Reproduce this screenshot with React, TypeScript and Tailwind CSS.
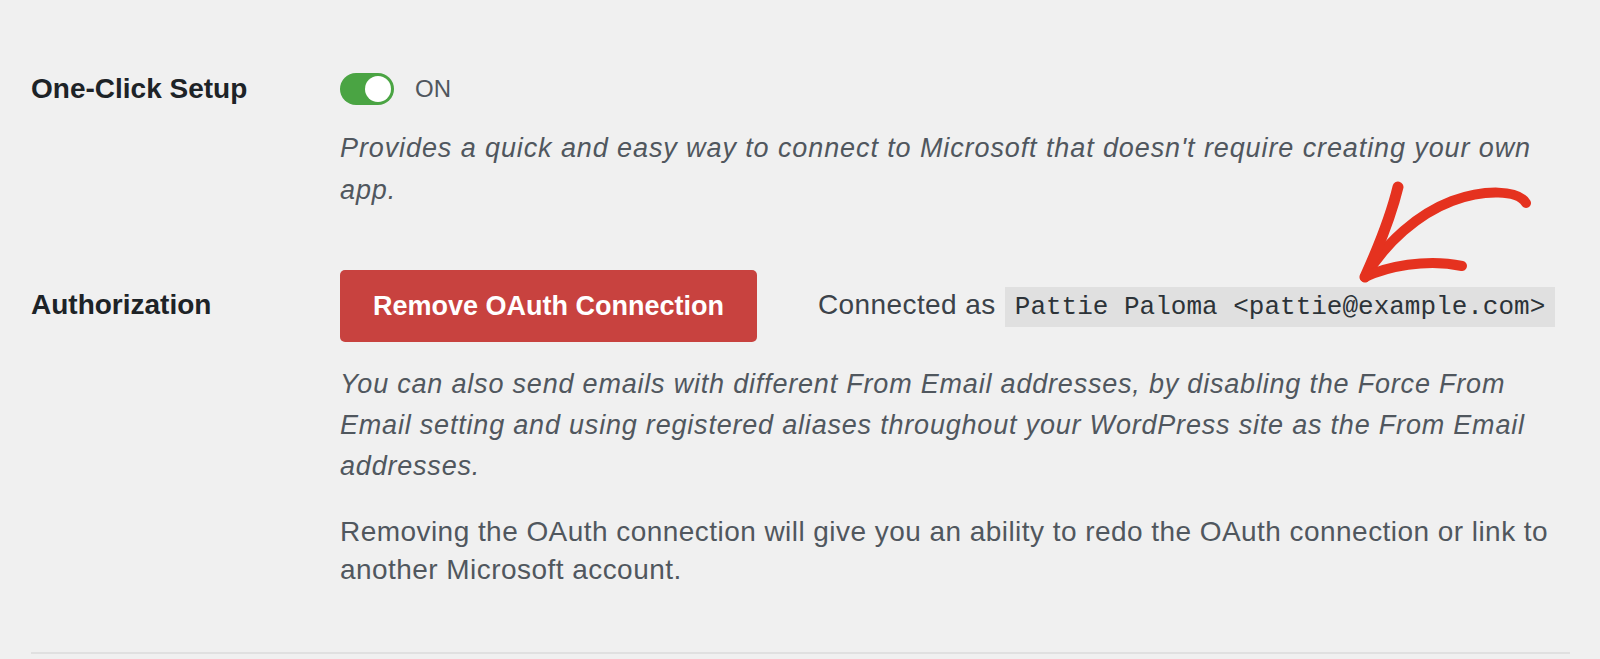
import { useState } from 'react';

const sans = { fontFamily: '"Liberation Sans", Arial, sans-serif' };
const mono = { fontFamily: '"Liberation Mono", "Courier New", monospace' };

function Toggle({ on, onChange }: { on: boolean; onChange: () => void }) {
  return (
    <button
      onClick={onChange}
      className={`relative w-[54px] h-[32px] rounded-full shrink-0 transition ${on ? 'bg-[#4aa443]' : 'bg-[#b7b7b7]'}`}
    >
      <span
        className={`absolute top-[3px] w-[26px] h-[26px] rounded-full bg-white transition ${on ? 'left-[25px]' : 'left-[3px]'}`}
      />
    </button>
  );
}

// hand-drawn annotation arrow
function Scribble() {
  return (
    <svg
      className="absolute left-[1350px] top-[180px] pointer-events-none"
      width="190"
      height="110"
      viewBox="0 0 190 110"
      fill="none"
      stroke="#e5321f"
      strokeLinecap="round"
      strokeLinejoin="round"
    >
      <path d="M176 23 C168 10 135 9 102 21 C68 34 36 62 15 97" strokeWidth="10" />
      <path d="M48 7 C41 36 29 66 15 97" strokeWidth="11" />
      <path d="M15 97 C36 87 76 78 112 86" strokeWidth="10" />
    </svg>
  );
}

export default function App() {
  const [oneClick, setOneClick] = useState(true);

  return (
    <div className="relative min-h-[659px] bg-[#f0f0f0] pl-[31px] pr-[30px] pt-[73px] text-[#3c434a]" style={sans}>
      <Scribble />

      {/* One-Click Setup */}
      <div className="flex">
        <div className="w-[309px] shrink-0 text-[28px] leading-[32px] font-bold text-[#1d2327]">One-Click Setup</div>
        <div className="flex-1 min-w-0">
          <div className="flex items-center">
            <Toggle on={oneClick} onChange={() => setOneClick(!oneClick)} />
            <span className="ml-[21px] text-[24px] leading-[32px] text-[#50575e]">{oneClick ? 'ON' : 'OFF'}</span>
          </div>
          <p className="mt-[22px] max-w-[1215px] text-[27px] leading-[42px] tracking-[0.9px] italic text-[#50575e]">
            Provides a quick and easy way to connect to Microsoft that doesn't require creating your own app.
          </p>
        </div>
      </div>

      {/* Authorization */}
      <div className="flex mt-[59px]">
        <div className="w-[309px] shrink-0 pt-[19px] text-[28px] leading-[32px] font-bold text-[#1d2327]">Authorization</div>
        <div className="flex-1 min-w-0">
          <div className="flex items-center">
            <button className="h-[72px] w-[417px] rounded-[5px] bg-[#c8423f] text-white text-[27px] font-bold">
              Remove OAuth Connection
            </button>
            <span className="ml-[61px] text-[28px] leading-[32px] tracking-[0.4px] text-[#3c434a]">
              Connected as{' '}
              <code className="ml-[1px] bg-[#e0e0e0] px-[10px] py-[5px] text-[26px] tracking-normal text-[#2c3338]" style={mono}>
                Pattie Paloma &lt;pattie@example.com&gt;
              </code>
            </span>
          </div>
          <p className="mt-[22px] max-w-[1215px] text-[27px] leading-[41px] tracking-[0.8px] italic text-[#50575e]">
            You can also send emails with different From Email addresses, by disabling the Force From Email setting and
            using registered aliases throughout your WordPress site as the From Email addresses.
          </p>
          <p className="mt-[26px] text-[28px] leading-[38px] tracking-[0.45px] text-[#50575e]">
            Removing the OAuth connection will give you an ability to redo the OAuth connection or link to another
            Microsoft account.
          </p>
        </div>
      </div>

      <div className="mt-[63px] h-[2px] bg-[#e0e0e0]" />
    </div>
  );
}
